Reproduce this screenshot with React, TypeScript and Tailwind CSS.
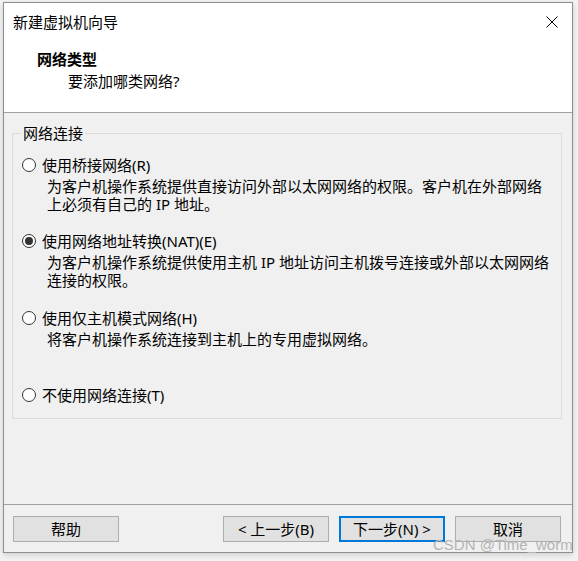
import React from "react";

const font = { fontFamily: "'Noto Sans', 'Noto Sans CJK SC', sans-serif" };

function Radio({ checked }: { checked?: boolean }) {
  return (
    <span className="w-[14px] h-[14px] rounded-full border border-[#333333] bg-white flex items-center justify-center shrink-0">
      {checked ? <span className="w-[8px] h-[8px] rounded-full bg-[#333333]" /> : null}
    </span>
  );
}

function Option({
  label,
  lines,
  checked,
  className,
}: {
  label: string;
  lines: string[];
  checked?: boolean;
  className?: string;
}) {
  return (
    <div className={className}>
      <div className="flex items-center h-[18px] pl-[9px] gap-[6px]">
        <Radio checked={checked} />
        <span className="whitespace-nowrap leading-[18px]">{label}</span>
      </div>
      {lines.length > 0 ? (
        <div className="pl-[34px] mt-[3px]">
          {lines.map((l, i) => (
            <div key={i} className="whitespace-nowrap leading-[18px] h-[18px]">
              {l}
            </div>
          ))}
        </div>
      ) : null}
    </div>
  );
}

function Btn({ children, primary, className }: { children: React.ReactNode; primary?: boolean; className?: string }) {
  return (
    <div
      className={
        "h-[26px] w-[106px] flex items-center justify-center bg-[#e1e1e1] leading-[18px] whitespace-nowrap " +
        (primary ? "border-2 border-[#0078d7] " : "border border-[#adadad] ") +
        (className ?? "")
      }
    >
      {children}
    </div>
  );
}

export default function App() {
  return (
    <div className="relative w-[578px] h-[561px] overflow-hidden bg-[#f3f3f3] text-[15px] text-black" style={font}>
      <div className="ml-[3px] mt-[2px] w-[570px] h-[551px] border border-[#8e8e8e] bg-[#f0f0f0] flex flex-col shadow-[0_2px_6px_rgba(0,0,0,0.15)]">
        {/* header */}
        <div className="h-[110px] bg-white border-b border-[#a0a0a0] shrink-0 pt-[10px]">
          <div className="flex items-center justify-between h-[18px] pl-[9px] pr-[14px]">
            <span className="leading-[18px] whitespace-nowrap">新建虚拟机向导</span>
            <svg width="12" height="12" viewBox="0 0 12 12" className="block">
              <path d="M0.5 0.5 L11.5 11.5 M11.5 0.5 L0.5 11.5" stroke="#000" strokeWidth="1" fill="none" />
            </svg>
          </div>
          <div className="mt-[19px] pl-[33px] leading-[18px] font-bold whitespace-nowrap">网络类型</div>
          <div className="mt-[4px] pl-[64px] leading-[18px] whitespace-nowrap">要添加哪类网络?</div>
        </div>

        {/* main */}
        <div className="flex-1 pl-[8px] pr-[10px] pt-[11px]">
          <fieldset className="border border-[#dcdcdc] pt-[14px] pb-[14px]">
            <legend className="ml-[8px] px-[2px] leading-[18px]">网络连接</legend>
            <Option
              label="使用桥接网络(R)"
              lines={[
                "为客户机操作系统提供直接访问外部以太网网络的权限。客户机在外部网络",
                "上必须有自己的 IP 地址。",
              ]}
            />
            <Option
              className="mt-[19px]"
              checked
              label="使用网络地址转换(NAT)(E)"
              lines={["为客户机操作系统提供使用主机 IP 地址访问主机拨号连接或外部以太网网络", "连接的权限。"]}
            />
            <Option className="mt-[20px]" label="使用仅主机模式网络(H)" lines={["将客户机操作系统连接到主机上的专用虚拟网络。"]} />
            <Option className="mt-[38px]" label="不使用网络连接(T)" lines={[]} />
          </fieldset>
        </div>

        {/* footer */}
        <div className="h-[48px] shrink-0 border-t border-[#a0a0a0] pt-[11px] pl-[9px] pr-[11px] flex items-start">
          <Btn>帮助</Btn>
          <div className="flex-1" />
          <div className="flex gap-[10px]">
            <Btn>&lt; 上一步(B)</Btn>
            <Btn primary>下一步(N) &gt;</Btn>
            <Btn>取消</Btn>
          </div>
        </div>
      </div>

      <div
        className="absolute left-[433px] top-[536px] leading-[18px] text-[15px] text-[#b4b4b4] whitespace-nowrap"
        style={{ fontFamily: "'Liberation Sans', Arial, sans-serif" }}
      >
        CSDN @Time_worm
      </div>
    </div>
  );
}
